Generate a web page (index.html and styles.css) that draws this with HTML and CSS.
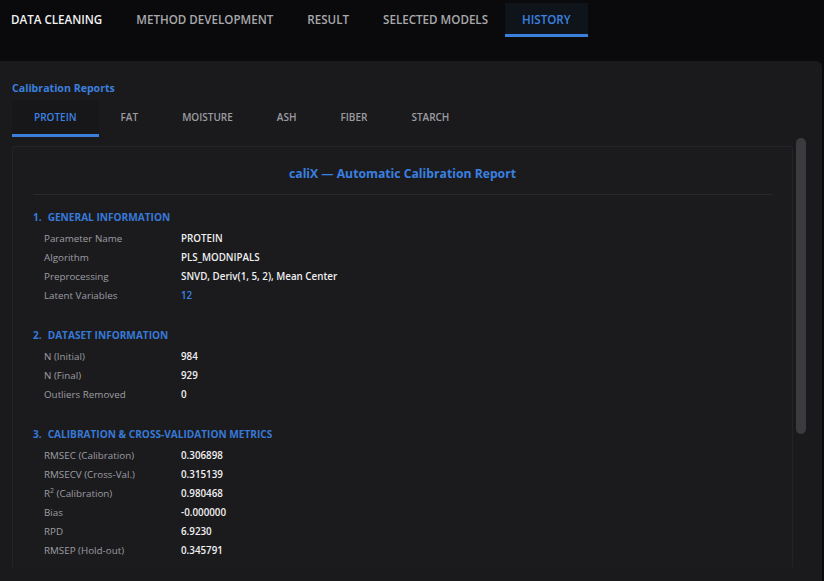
FILE: index.html
```html
<!DOCTYPE html>
<html lang="en">
<head>
    <meta charset="UTF-8">
    <meta name="viewport" content="width=device-width, initial-scale=1.0">
    <link rel="stylesheet" href="styles.css">
    <title>caliX - History</title>
</head>
<body>

    <header class="topnav">
        <a class="tab tab-light">DATA CLEANING</a>
        <a class="tab">METHOD DEVELOPMENT</a>
        <a class="tab">RESULT</a>
        <a class="tab">SELECTED MODELS</a>
        <a class="tab active">HISTORY</a>
    </header>

    <main class="panel">
        <h4 class="panel-title">Calibration Reports</h4>

        <nav class="subtabs">
            <a class="subtab active">PROTEIN</a>
            <a class="subtab">FAT</a>
            <a class="subtab">MOISTURE</a>
            <a class="subtab">ASH</a>
            <a class="subtab">FIBER</a>
            <a class="subtab">STARCH</a>
        </nav>

        <div class="report-wrap">
            <div class="report-viewport">
                <article class="report">
                    <h3 class="report-title">caliX — Automatic Calibration Report</h3>

                    <section class="report-section">
                        <h5><span class="num">1.</span>GENERAL INFORMATION</h5>
                        <table class="kv">
                            <tr><td>Parameter Name</td><td>PROTEIN</td></tr>
                            <tr><td>Algorithm</td><td>PLS_MODNIPALS</td></tr>
                            <tr><td>Preprocessing</td><td>SNVD, Deriv(1, 5, 2), Mean Center</td></tr>
                            <tr><td>Latent Variables</td><td class="accent">12</td></tr>
                        </table>
                    </section>

                    <section class="report-section">
                        <h5><span class="num">2.</span>DATASET INFORMATION</h5>
                        <table class="kv">
                            <tr><td>N (Initial)</td><td>984</td></tr>
                            <tr><td>N (Final)</td><td>929</td></tr>
                            <tr><td>Outliers Removed</td><td>0</td></tr>
                        </table>
                    </section>

                    <section class="report-section">
                        <h5><span class="num">3.</span>CALIBRATION &amp; CROSS-VALIDATION METRICS</h5>
                        <table class="kv">
                            <tr><td>RMSEC (Calibration)</td><td>0.306898</td></tr>
                            <tr><td>RMSECV (Cross-Val.)</td><td>0.315139</td></tr>
                            <tr><td>R<sup>2</sup> (Calibration)</td><td>0.980468</td></tr>
                            <tr><td>Bias</td><td>-0.000000</td></tr>
                            <tr><td>RPD</td><td>6.9230</td></tr>
                            <tr><td>RMSEP (Hold-out)</td><td>0.345791</td></tr>
                        </table>
                    </section>
                </article>
            </div>
            <div class="scrolltrack"><div class="scrollthumb"></div></div>
        </div>
    </main>

</body>
</html>
```

FILE: styles.css
```css
body {
    margin: 0;
    font-family: 'Open Sans', 'Noto Sans', sans-serif;
    background-color: #0a0a0c;
    color: #e8e8e8;
    height: 581px;
    overflow: hidden;
}
a {
    cursor: pointer;
}

/* top navigation */
.topnav {
    display: flex;
    align-items: flex-start;
    height: 61px;
    background-color: #0a0a0c;
}
.tab {
    display: block;
    padding: 0 17px;
    height: 37px;
    line-height: 40px;
    font-size: 11.6px;
    font-weight: 600;
    color: #a9a9ac;
    box-sizing: border-box;
}
.tab:first-child {
    padding-left: 11px;
}
.tab-light {
    color: #f2f2f2;
}
.tab.active {
    margin-top: 3px;
    height: 34px;
    line-height: 34px;
    color: #3c82e2;
    background-color: #0e1419;
    border-bottom: 3px solid #3b7fdc;
}

/* main panel */
.panel {
    background-color: #1a1a1d;
    margin-right: 2px;
    border-radius: 0 6px 0 0;
    height: 520px;
    padding: 0 16px 0 12px;
}
.panel-title {
    margin: 0;
    padding-top: 20px;
    font-size: 10.6px;
    line-height: 15px;
    font-weight: 700;
    color: #3a7fdc;
}

.subtabs {
    display: flex;
    margin-top: 4px;
    height: 37px;
}
.subtab {
    display: block;
    padding: 0 22px;
    line-height: 35px;
    font-size: 10px;
    font-weight: 600;
    color: #9d9da1;
}
.subtab.active {
    color: #3c82e2;
    background-color: #17171a;
    border-bottom: 3px solid #3b7fdc;
    line-height: 33px;
    padding-top: 1px;
}

/* report area with its scrollbar */
.report-wrap {
    display: flex;
    height: 430px;
}
.report-viewport {
    flex: 1;
    overflow: hidden;
}
.scrolltrack {
    width: 10px;
    margin-left: 3px;
    padding-top: 1px;
}
.scrollthumb {
    height: 296px;
    background-color: #3b3b3f;
    border-radius: 5px;
}

.report {
    margin-top: 9px;
    min-height: 580px;
    padding: 17px 20px 20px 20px;
    background-color: #1b1b1e;
    border: 1px solid #242428;
    border-radius: 3px;
}
.report-title {
    margin: 0;
    padding-bottom: 10px;
    border-bottom: 1px solid #2a2a2e;
    text-align: center;
    font-size: 12.2px;
    line-height: 20px;
    font-weight: 700;
    color: #3a80e0;
}

.report-section {
    margin-bottom: 20px;
}
.report-title + .report-section {
    margin-top: 12px;
}
.report-section h5 {
    margin: 0 0 2px 0;
    font-size: 10.1px;
    line-height: 20px;
    font-weight: 700;
    color: #3779d8;
}
.report-section .num {
    margin-right: 6px;
}

.kv {
    border-collapse: collapse;
    margin-left: 11px;
}
.kv td {
    padding: 0;
    height: 19px;
    line-height: 19px;
    font-size: 9.8px;
    white-space: nowrap;
}
.kv td:first-child {
    width: 137px;
    color: #9d9da2;
}
.kv td + td {
    color: #f0f0f0;
    font-weight: 600;
}
.kv td.accent {
    color: #3c82e2;
}
.kv sup {
    font-size: 7px;
    line-height: 0;
}
```
